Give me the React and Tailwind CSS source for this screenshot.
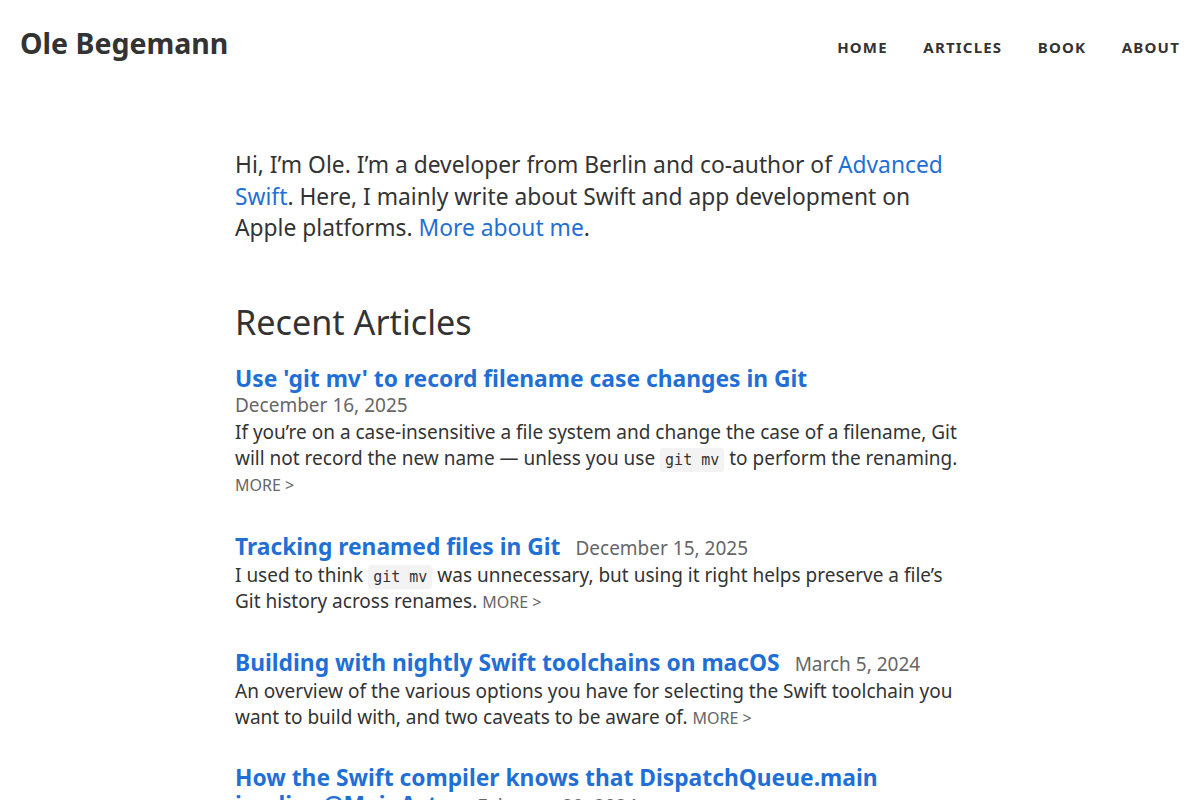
const articles = [
  {
    title: "Use 'git mv' to record filename case changes in Git",
    date: "December 16, 2025",
    dateBelow: true,
    body: (
      <>
        If you’re on a case-insensitive a file system and change the case of a filename, Git will not record the new name — unless you use <Code>git mv</Code> to perform the renaming.
      </>
    ),
    moreBlock: true,
  },
  {
    title: "Tracking renamed files in Git",
    date: "December 15, 2025",
    body: (
      <>
        I used to think <Code>git mv</Code> was unnecessary, but using it right helps preserve a file’s Git history across renames.
      </>
    ),
  },
  {
    title: "Building with nightly Swift toolchains on macOS",
    date: "March 5, 2024",
    body: (
      <>
        An overview of the various options you have for selecting the Swift toolchain you want to build with, and two caveats to be aware of.
      </>
    ),
  },
  {
    title: "How the Swift compiler knows that DispatchQueue.main implies @MainActor",
    date: "February 29, 2024",
    body: <>A look at the compiler source.</>,
  },
];

function Code({ children }) {
  return (
    <code className="rounded-[3px] bg-[#f3f3f3] px-[5px] py-[3px] font-['DejaVu_Sans_Mono',monospace] text-[15px] leading-none text-[#333]">
      {children}
    </code>
  );
}

function More() {
  return <a className="text-[16px] uppercase leading-none text-[#666]">More &gt;</a>;
}

export default function App() {
  return (
    <div className="min-h-[800px] bg-white font-['Noto_Sans',sans-serif] text-[#333]">
      <header className="flex items-start justify-between px-5 pt-[25px]">
        <a className="text-[28.5px] font-bold leading-[36px] text-[#333]">Ole Begemann</a>
        <nav className="flex gap-[35.5px] pt-[12px] text-[15px] font-bold uppercase leading-[20px] tracking-[1.2px] text-[#333]">
          <a>Home</a>
          <a>Articles</a>
          <a>Book</a>
          <a>About</a>
        </nav>
      </header>

      <main className="mx-auto w-[730px] pt-[88px]">
        <p className="text-[22.8px] leading-[31.5px]">
          Hi, I’m Ole. I’m a developer from Berlin and co-author of{" "}
          <a className="text-[#1f6fd6]">Advanced Swift</a>. Here, I mainly write about Swift and app development on Apple platforms.{" "}
          <a className="text-[#1f6fd6]">More about me</a>.
        </p>

        <h2 className="mt-[57px] text-[34.2px] leading-[42px]">Recent Articles</h2>

        <div className="mt-[22px] flex flex-col gap-[34px]">
          {articles.map((a) => (
            <article key={a.title}>
              <h3 className="text-[22.8px] leading-[27px]">
                <a className="font-bold text-[#1f6fd6]">{a.title}</a>
                {!a.dateBelow && (
                  <span className="ml-[15px] text-[19px] font-normal text-[#666]">{a.date}</span>
                )}
              </h3>
              {a.dateBelow && <p className="text-[19px] leading-[27px] text-[#666]">{a.date}</p>}
              <p className="text-[19px] leading-[26.3px]">
                {a.body}
                {!a.moreBlock && (
                  <>
                    {" "}
                    <More />
                  </>
                )}
              </p>
              {a.moreBlock && (
                <p className="text-[16px] leading-[28px]">
                  <More />
                </p>
              )}
            </article>
          ))}
        </div>
      </main>
    </div>
  );
}
